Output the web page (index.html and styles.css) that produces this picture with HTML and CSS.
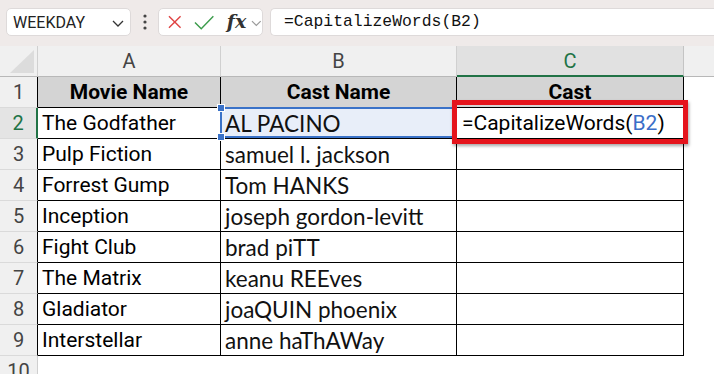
FILE: index.html
```html
<!DOCTYPE html>
<html>
<head>
<meta charset="utf-8">
<link rel="stylesheet" href="styles.css">
</head>
<body>
<div class="toolbar">
  <div class="namebox">
    <span>WEEKDAY</span>
    <svg class="nb-chev" width="12" height="7" viewBox="0 0 12 7"><polyline points="1,1 6,6 11,1" fill="none" stroke="#333" stroke-width="1.3"/></svg>
  </div>
  <div class="dots">
    <svg width="4" height="16" viewBox="0 0 4 16"><circle cx="2" cy="2" r="1.6" fill="#444"/><circle cx="2" cy="8" r="1.6" fill="#444"/><circle cx="2" cy="14" r="1.6" fill="#444"/></svg>
  </div>
  <div class="fxbox">
    <svg class="ic-x" width="14" height="14" viewBox="0 0 14 14"><path d="M1 1 L13 13 M13 1 L1 13" stroke="#e04545" stroke-width="1.5" fill="none"/></svg>
    <svg class="ic-check" width="21" height="15" viewBox="0 0 21 15"><polyline points="1,7.5 7.5,14 20,1" fill="none" stroke="#3c9c4c" stroke-width="1.5"/></svg>
    <span class="fx">fx</span>
    <svg class="fx-chev" width="11" height="7" viewBox="0 0 11 7"><polyline points="1,1 5.5,5.5 10,1" fill="none" stroke="#9a9a9a" stroke-width="1.2"/></svg>
  </div>
  <div class="formula">=CapitalizeWords(B2)</div>
</div>

<div class="sheet">
  <div class="c corner"><div class="tri"></div></div>
  <div class="c ch">A</div>
  <div class="c ch">B</div>
  <div class="c ch sel">C</div>
  <div class="c ch last"></div>

  <div class="c rh">1</div>
  <div class="c d hdr">Movie Name</div>
  <div class="c d hdr">Cast Name</div>
  <div class="c d hdr">Cast</div>
  <div class="c e"></div>

  <div class="c rh sel">2</div>
  <div class="c d">The Godfather</div>
  <div class="c d b selb">AL PACINO<span class="hdl hdl-t"></span><span class="hdl hdl-b"></span></div>
  <div class="c d edit">=CapitalizeWords(<span class="ref">B2</span>)</div>
  <div class="c e"></div>

  <div class="c rh">3</div>
  <div class="c d">Pulp Fiction</div>
  <div class="c d b">samuel l. jackson</div>
  <div class="c d"></div>
  <div class="c e"></div>

  <div class="c rh">4</div>
  <div class="c d">Forrest Gump</div>
  <div class="c d b">Tom HANKS</div>
  <div class="c d"></div>
  <div class="c e"></div>

  <div class="c rh">5</div>
  <div class="c d">Inception</div>
  <div class="c d b">joseph gordon-levitt</div>
  <div class="c d"></div>
  <div class="c e"></div>

  <div class="c rh">6</div>
  <div class="c d">Fight Club</div>
  <div class="c d b">brad piTT</div>
  <div class="c d"></div>
  <div class="c e"></div>

  <div class="c rh">7</div>
  <div class="c d">The Matrix</div>
  <div class="c d b">keanu REEves</div>
  <div class="c d"></div>
  <div class="c e"></div>

  <div class="c rh">8</div>
  <div class="c d">Gladiator</div>
  <div class="c d b">joaQUIN phoenix</div>
  <div class="c d"></div>
  <div class="c e"></div>

  <div class="c rh">9</div>
  <div class="c d">Interstellar</div>
  <div class="c d b">anne haThAWay</div>
  <div class="c d"></div>
  <div class="c e"></div>

  <div class="c rh r10">10</div>
  <div class="c e"></div>
  <div class="c e"></div>
  <div class="c e"></div>
  <div class="c e"></div>
</div>
</body>
</html>
```

FILE: styles.css
```css
html, body {
  margin: 0;
  padding: 0;
  background: #ffffff;
  overflow: hidden;
}
body {
  font-family: Roboto, "Noto Sans", sans-serif;
  color: #000;
}

/* ---------- formula bar ---------- */
.toolbar {
  height: 46px;
  box-sizing: border-box;
  background: #efeae9;
  display: flex;
  align-items: flex-start;
  padding: 8px 0 0 6px;
}
.namebox {
  width: 125px;
  height: 28px;
  box-sizing: border-box;
  background: #fff;
  border: 1px solid #dedada;
  border-radius: 5px;
  display: flex;
  align-items: center;
  justify-content: space-between;
  padding: 0 6px 0 6px;
  font-size: 16px;
  color: #222;
}
.nb-chev { margin-top: 2px; }
.dots {
  width: 27px;
  height: 28px;
  display: flex;
  align-items: center;
  justify-content: center;
}
.fxbox {
  width: 105px;
  height: 28px;
  box-sizing: border-box;
  background: #fff;
  border: 1px solid #dedada;
  border-radius: 5px;
  display: flex;
  align-items: center;
}
.ic-x { margin-left: 9px; }
.ic-check { margin-left: 12px; }
.fx {
  margin-left: 13px;
  font-family: "DejaVu Serif", "Liberation Serif", serif;
  font-style: italic;
  font-weight: 700;
  font-size: 19px;
  color: #333;
  line-height: 1;
  margin-top: -2px;
}
.fx-chev { margin-left: 5px; margin-top: 3px; }
.formula {
  flex: 1;
  margin-left: 7px;
  height: 28px;
  box-sizing: border-box;
  background: #fff;
  border: 1px solid #dedada;
  border-right: none;
  border-radius: 5px 0 0 5px;
  padding-left: 13px;
  font-family: "Liberation Mono", "DejaVu Sans Mono", monospace;
  font-size: 16.4px;
  line-height: 26px;
  color: #111;
}

/* ---------- sheet grid ---------- */
.sheet {
  display: grid;
  grid-template-columns: 38px 183px 236px 227px 1fr;
  grid-auto-rows: 31px;
}
.c {
  box-sizing: border-box;
  display: flex;
  align-items: center;
  white-space: nowrap;
  min-width: 0;
}
.corner {
  background: #f0f0f0;
  border-right: 1px solid #d0d0d0;
  border-bottom: 1px solid #b8b8b8;
  justify-content: flex-end;
  align-items: flex-end;
  padding: 0 3px 3px 0;
}
.tri {
  width: 24px;
  height: 23px;
  background: #dcdcdc;
  clip-path: polygon(100% 0, 100% 100%, 0 100%);
}
.ch {
  background: #f0f0f0;
  border-right: 1px solid #d0d0d0;
  border-bottom: 1px solid #b8b8b8;
  justify-content: center;
  font-size: 20px;
  color: #444;
}
.ch.sel {
  background: #e1e1e1;
  color: #217346;
  border-bottom: 2px solid #217346;
  border-right: 1px solid #c4c4c4;
}
.ch.last { border-right: none; }

.rh {
  background: #f0f0f0;
  border-right: 1px solid #000;
  border-bottom: 1px solid #dadada;
  justify-content: center;
  font-size: 20px;
  color: #444;
}
.rh.sel {
  background: #e4e4e4;
  color: #217346;
  border-right: 2px solid #217346;
}
.rh.r10 { border-right: 1px solid #cfcfcf; }

.d {
  border-right: 1px solid #000;
  border-bottom: 1px solid #000;
  padding-left: 4px;
  font-size: 21px;
}
.hdr {
  background: #d4d4d4;
  font-weight: 700;
  justify-content: center;
  padding-left: 0;
}
.b {
  font-family: Lato, "Noto Sans", sans-serif;
  font-size: 22.5px;
  color: #111;
}

/* selected source cell B2 */
.selb {
  position: relative;
  background: #e8eef9;
}
.selb::after {
  content: "";
  position: absolute;
  top: -1px;
  left: -1px;
  right: -1px;
  bottom: 0;
  border: 2px solid #3a72c8;
  pointer-events: none;
}
.hdl {
  position: absolute;
  left: -4px;
  width: 6px;
  height: 6px;
  background: #3a72c8;
  border: 1px solid #fff;
  z-index: 2;
}
.hdl-t { top: -4px; }
.hdl-b { bottom: -3px; }

/* editing cell C2 with red highlight */
.edit {
  position: relative;
  background: #fff;
  padding-left: 5px;
  z-index: 3;
}
.edit::after {
  content: "";
  position: absolute;
  top: -8px;
  left: -5px;
  right: -5px;
  bottom: -6px;
  border: 5px solid #e5141c;
  box-shadow: 1px 2px 3px rgba(0, 0, 0, 0.35);
  pointer-events: none;
}
.ref { color: #3b6ec8; }
```
